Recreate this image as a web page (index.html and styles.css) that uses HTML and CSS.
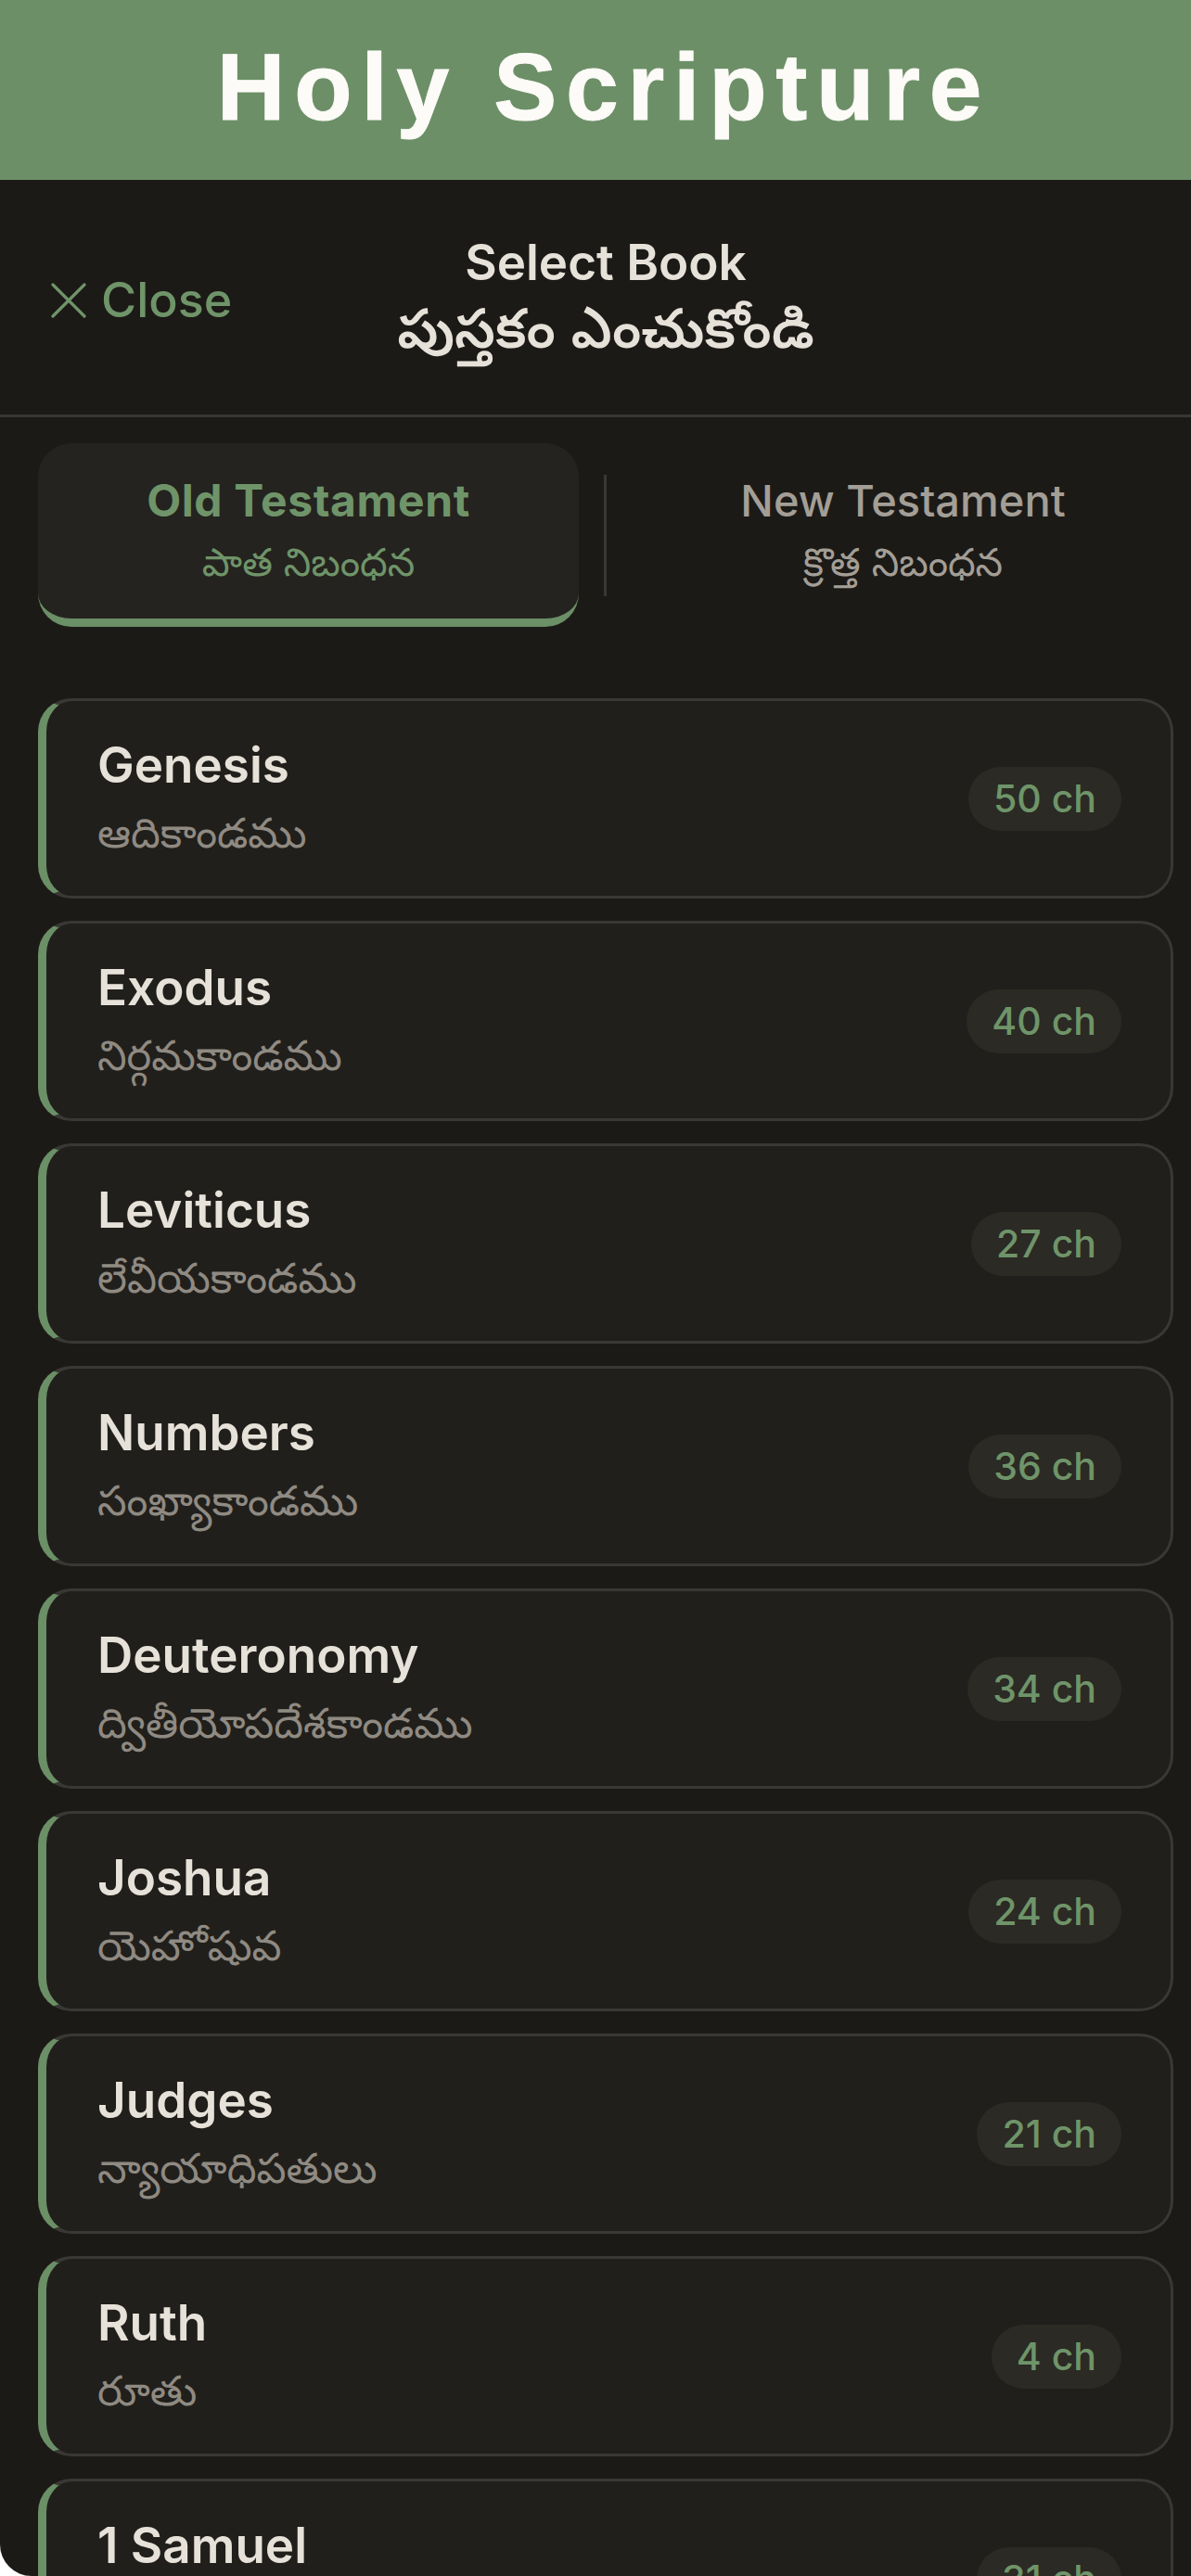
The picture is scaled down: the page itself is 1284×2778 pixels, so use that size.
FILE: index.html
```html
<!DOCTYPE html>
<html lang="en">
<head>
<meta charset="utf-8">
<title>Holy Scripture</title>
<link rel="stylesheet" href="styles.css">
</head>
<body>
<div class="page">
  <header class="appbar">
    <h1 class="appbar-title">Holy Scripture</h1>
  </header>
  <main class="sheet">
    <div class="sheet-header">
      <button class="close-btn" type="button">
        <svg class="close-icon" viewBox="0 0 38 38" aria-hidden="true">
          <path d="M2 2 L36 36 M36 2 L2 36" fill="none" stroke="currentColor" stroke-width="3.2" stroke-linecap="round"/>
        </svg>
        <span>Close</span>
      </button>
      <div class="sheet-title">
        <div class="sheet-title-en">Select Book</div>
        <div class="sheet-title-te">పుస్తకం ఎంచుకోండి</div>
      </div>
      <div class="sheet-spacer"></div>
    </div>

    <div class="tabs">
      <div class="tab tab-active">
        <div class="tab-en">Old Testament</div>
        <div class="tab-te">పాత నిబంధన</div>
      </div>
      <div class="tab-divider"></div>
      <div class="tab">
        <div class="tab-en">New Testament</div>
        <div class="tab-te">క్రొత్త నిబంధన</div>
      </div>
    </div>

    <ul class="book-list">
      <li class="book">
        <div class="book-names"><div class="book-en">Genesis</div><div class="book-te">ఆదికాండము</div></div>
        <span class="badge">50 ch</span>
      </li>
      <li class="book">
        <div class="book-names"><div class="book-en">Exodus</div><div class="book-te">నిర్గమకాండము</div></div>
        <span class="badge">40 ch</span>
      </li>
      <li class="book">
        <div class="book-names"><div class="book-en">Leviticus</div><div class="book-te">లేవీయకాండము</div></div>
        <span class="badge">27 ch</span>
      </li>
      <li class="book">
        <div class="book-names"><div class="book-en">Numbers</div><div class="book-te">సంఖ్యాకాండము</div></div>
        <span class="badge">36 ch</span>
      </li>
      <li class="book">
        <div class="book-names"><div class="book-en">Deuteronomy</div><div class="book-te">ద్వితీయోపదేశకాండము</div></div>
        <span class="badge">34 ch</span>
      </li>
      <li class="book">
        <div class="book-names"><div class="book-en">Joshua</div><div class="book-te">యెహోషువ</div></div>
        <span class="badge">24 ch</span>
      </li>
      <li class="book">
        <div class="book-names"><div class="book-en">Judges</div><div class="book-te">న్యాయాధిపతులు</div></div>
        <span class="badge">21 ch</span>
      </li>
      <li class="book">
        <div class="book-names"><div class="book-en">Ruth</div><div class="book-te">రూతు</div></div>
        <span class="badge">4 ch</span>
      </li>
      <li class="book">
        <div class="book-names"><div class="book-en">1 Samuel</div><div class="book-te">1 సమూయేలు</div></div>
        <span class="badge">31 ch</span>
      </li>
    </ul>
  </main>
</div>
</body>
</html>
```

FILE: styles.css
```css
* { box-sizing: border-box; }

html, body {
  margin: 0;
  padding: 0;
  background: #ffffff;
}

body {
  width: 1284px;
  height: 2778px;
  overflow: hidden;
  font-family: Inter, "Noto Sans", "Noto Sans Telugu", sans-serif;
}

.page {
  width: 1284px;
  height: 2778px;
  display: flex;
  flex-direction: column;
}

.appbar {
  height: 194px;
  flex: none;
  background: #6c8f67;
  display: flex;
  align-items: center;
  justify-content: center;
}

.appbar-title {
  margin: 0;
  font-family: "Liberation Sans", Arial, sans-serif;
  font-weight: 700;
  font-size: 102px;
  letter-spacing: 9.8px;
  color: #fcfbf7;
  line-height: 1;
  padding-left: 18px;
  padding-bottom: 6px;
  -webkit-text-stroke: 1px #fcfbf7;
}

.sheet {
  flex: 1;
  background: #1c1a17;
  border-bottom-left-radius: 34px;
  overflow: hidden;
}

.sheet-header {
  height: 256px;
  display: flex;
  align-items: center;
  padding: 0 33px 0 55px;
  border-bottom: 3px solid #393733;
}

.close-btn {
  flex: 1;
  display: flex;
  align-items: center;
  gap: 16px;
  background: none;
  border: 0;
  padding: 0;
  color: #6f9469;
  font-family: Inter, sans-serif;
  font-size: 52px;
  font-weight: 500;
  cursor: pointer;
  margin-top: 6px;
}

.close-icon {
  width: 38px;
  height: 38px;
  flex: none;
}

.sheet-spacer { flex: 1; }

.sheet-title {
  text-align: center;
  color: #e7e2d9;
  font-weight: 600;
}

.sheet-title-en {
  font-size: 53px;
  line-height: 62px;
}

.sheet-title-te {
  font-family: "Noto Sans Telugu", Inter, sans-serif;
  font-size: 59px;
  line-height: 50px;
  margin-top: 25px;
}

.tabs {
  display: flex;
  align-items: center;
  padding: 0 19px 0 41px;
  margin-top: 28px;
}

.tab {
  flex: 1;
  height: 198px;
  border-radius: 36px;
  display: flex;
  flex-direction: column;
  align-items: center;
  justify-content: center;
  color: #a39e96;
  padding-bottom: 9px;
}

.tab-active {
  background: #24231f;
  border-bottom: 9px solid #6b8f66;
  color: #6f9469;
  padding-bottom: 0;
}

.tab-en {
  font-size: 47px;
  line-height: 56px;
  font-weight: 500;
}

.tab-active .tab-en {
  font-weight: 700;
  font-size: 48px;
  letter-spacing: 0.6px;
}

.tab-te {
  font-family: "Noto Sans Telugu", Inter, sans-serif;
  font-size: 42px;
  line-height: 40px;
  margin-top: 25px;
}

.tab-divider {
  width: 3px;
  height: 131px;
  background: #3a3834;
  margin: 0 28px 0 27px;
  flex: none;
}

.book-list {
  list-style: none;
  margin: 77px 0 0 0;
  padding: 0 19px 0 41px;
  display: flex;
  flex-direction: column;
  gap: 24px;
}

.book {
  height: 216px;
  flex: none;
  background: #211f1b;
  border: 3px solid #3a3834;
  border-left: 9px solid #6b8f66;
  border-radius: 36px;
  display: flex;
  align-items: center;
  justify-content: space-between;
  padding: 0 53px 0 55px;
}

.book-names {
  display: flex;
  flex-direction: column;
}

.book-en {
  font-size: 53px;
  line-height: 62px;
  font-weight: 600;
  color: #e7e2d9;
}

.book-te {
  font-family: "Noto Sans Telugu", Inter, sans-serif;
  font-size: 45px;
  line-height: 44px;
  color: #8f8a82;
  margin-top: 28px;
}

.badge {
  height: 69px;
  line-height: 69px;
  padding: 0 27px;
  border-radius: 35px;
  background: #2b2a24;
  color: #6f9469;
  font-size: 41px;
  font-weight: 500;
  white-space: nowrap;
}
```
